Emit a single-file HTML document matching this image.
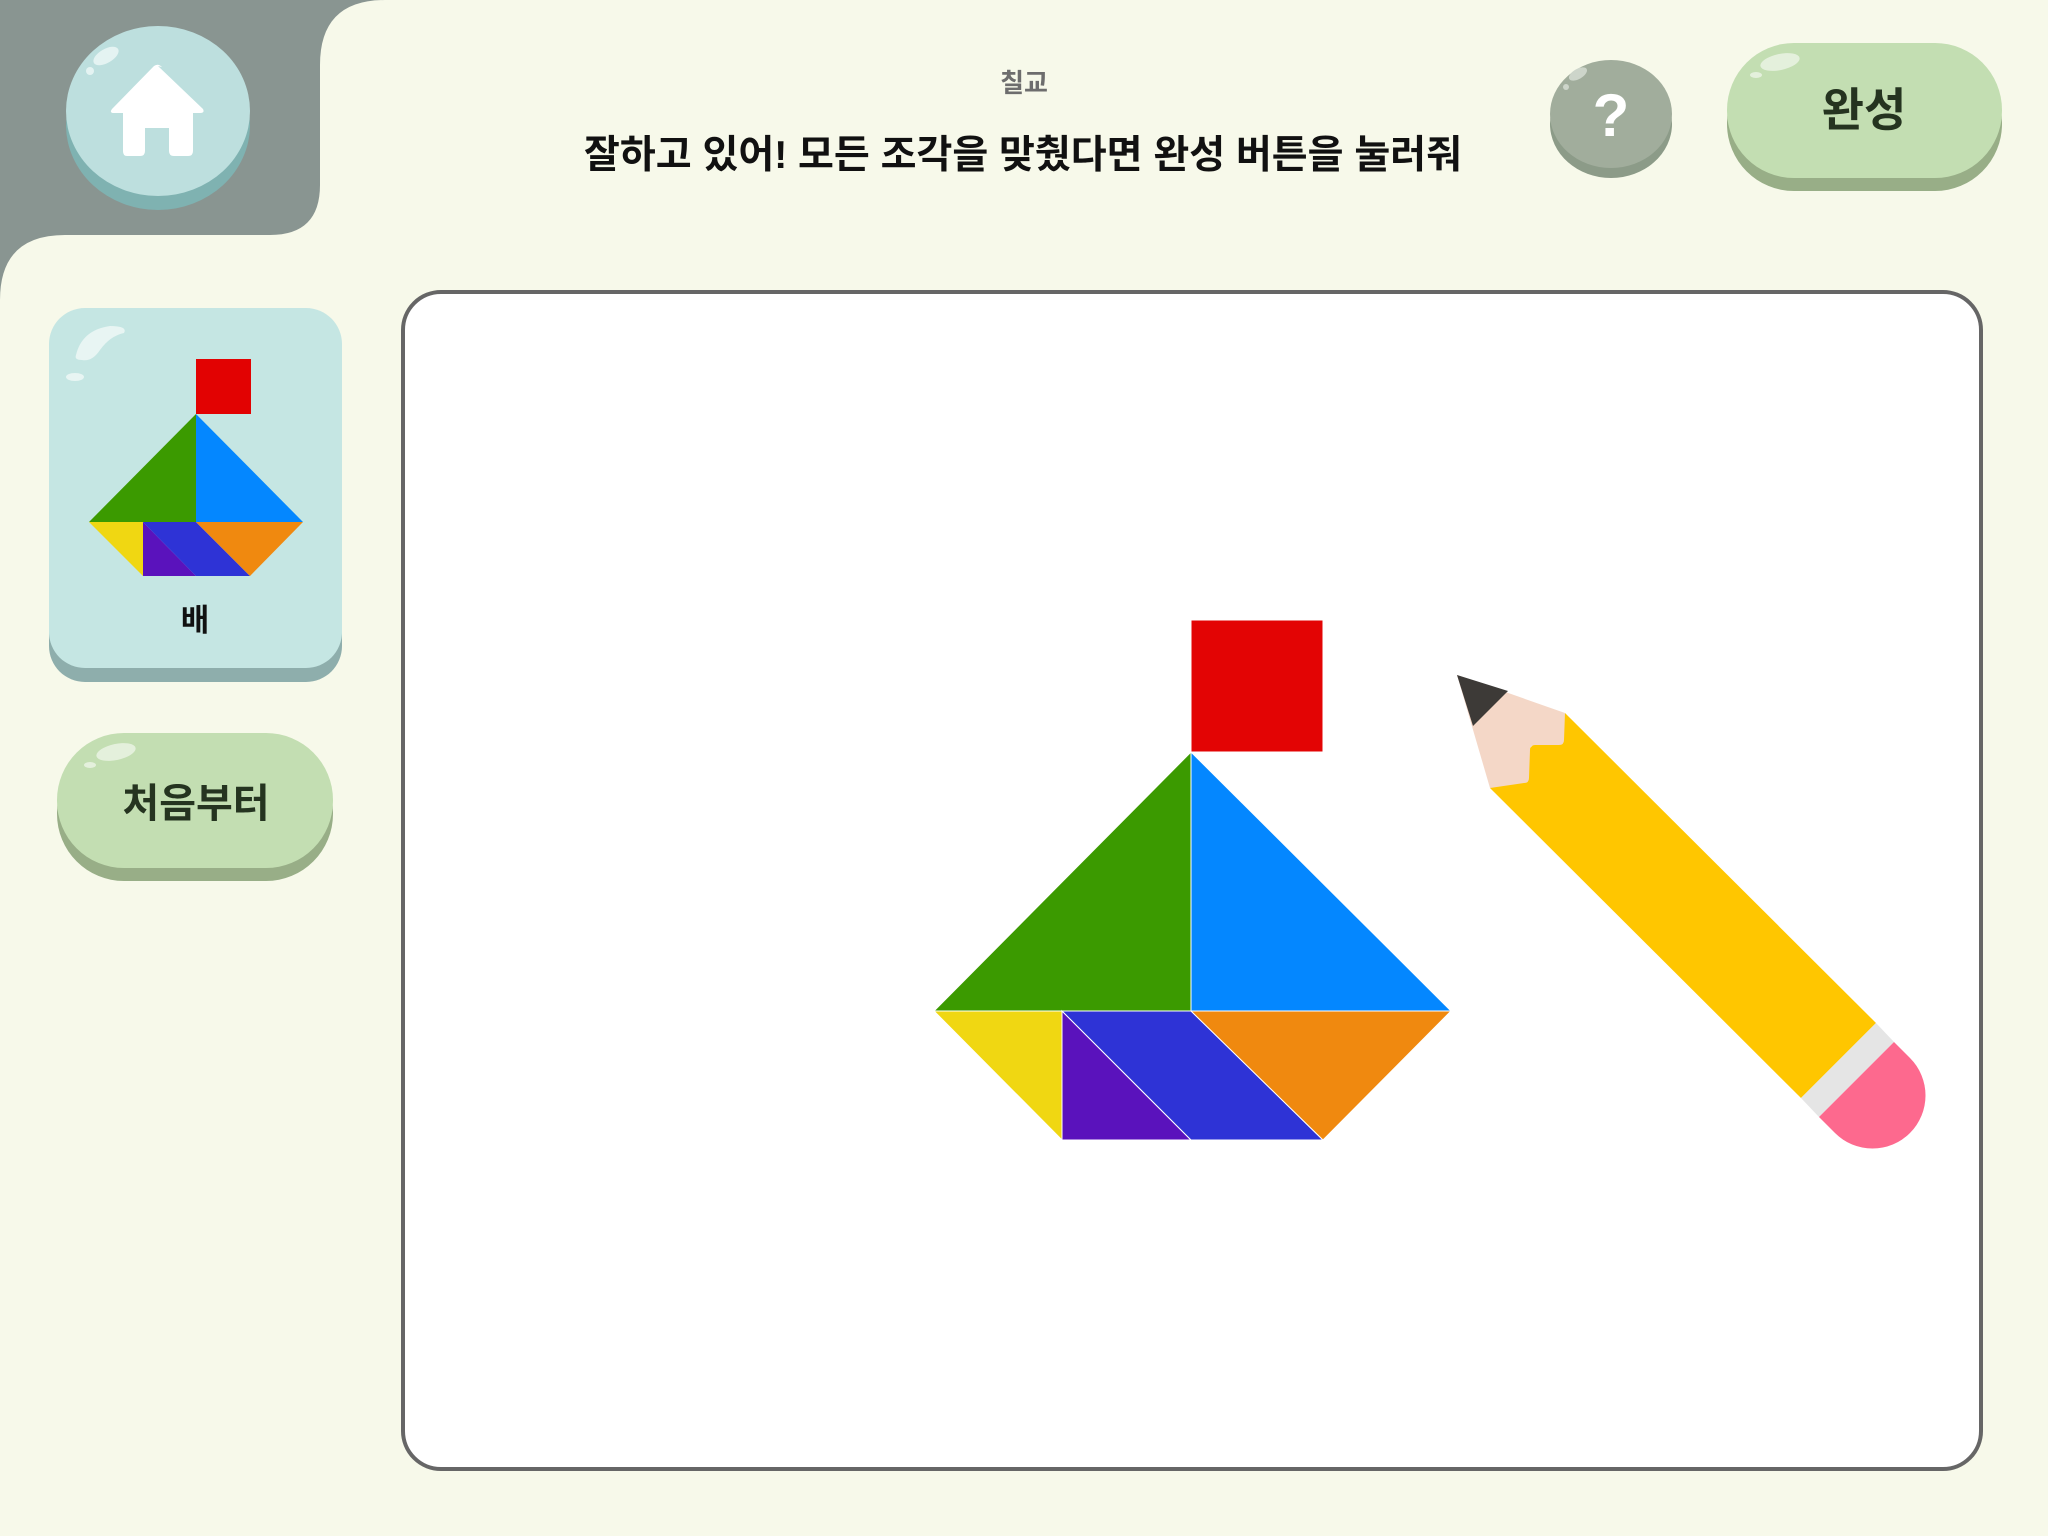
<!DOCTYPE html>
<html><head><meta charset="utf-8"><style>
html,body{margin:0;padding:0;background:#f7f9ea;}
svg{display:block}
text{font-family:"Liberation Sans","Noto Sans CJK KR","NanumGothic",sans-serif;font-weight:bold;}
</style></head><body>
<svg width="2048" height="1536" viewBox="0 0 2048 1536" xmlns="http://www.w3.org/2000/svg">
<rect width="2048" height="1536" fill="#f7f9ea"/>
<!-- top-left gray panel -->
<rect x="0" y="0" width="400" height="320" fill="#899591"/>
<path d="M0 320 L0 300 Q0 235 65 235 L270 235 Q320 235 320 185 L320 65 Q320 0 385 0 L400 0 L400 320 Z" fill="#f7f9ea"/>
<rect x="400" y="0" width="1648" height="320" fill="#f7f9ea"/>
<rect x="0" y="320" width="400" height="20" fill="#f7f9ea"/>
<!-- home button -->
<ellipse cx="158" cy="125" rx="92" ry="85" fill="#7fb2b1"/>
<ellipse cx="158" cy="111" rx="92" ry="85" fill="#bddfde"/>
<ellipse cx="106" cy="56" rx="14" ry="7" fill="#e4f3f2" transform="rotate(-30 106 56)"/>
<circle cx="90" cy="71" r="4" fill="#e4f3f2"/>
<path d="M158 66 L203 109 Q205 113 200 113 L193 113 L193 151 Q193 156 188 156 L174 156 Q169 156 169 151 L169 128 L145 128 L145 151 Q145 156 140 156 L127 156 Q123 156 123 151 L123 113 L114 113 Q109 113 112 109 L154 66 Q158 63 162 67Z" fill="#fff"/>
<!-- title texts -->
<text x="1024" y="92" font-size="26" fill="#6d6d6d" text-anchor="middle">칠교</text>
<text x="1023" y="168" font-size="39" fill="#111" text-anchor="middle" textLength="878" lengthAdjust="spacingAndGlyphs">잘하고 있어! 모든 조각을 맞췄다면 완성 버튼을 눌러줘</text>
<!-- help -->
<ellipse cx="1611" cy="124" rx="61" ry="54" fill="#8c9b88"/>
<ellipse cx="1611" cy="114" rx="61" ry="54" fill="#a1ad9c"/>
<ellipse cx="1578" cy="74" rx="10" ry="5" fill="#cdd5ca" transform="rotate(-30 1578 74)"/>
<circle cx="1566" cy="87" r="3" fill="#cdd5ca"/>
<text x="1611" y="136" font-size="60" fill="#fff" text-anchor="middle" font-family="Liberation Sans">?</text>
<!-- 완성 -->
<rect x="1727" y="56" width="275" height="135" rx="67" fill="#98ae87"/>
<rect x="1727" y="43" width="275" height="135" rx="67" fill="#c3deb2"/>
<ellipse cx="1780" cy="62" rx="20" ry="8" fill="#e4f0dc" transform="rotate(-12 1780 62)"/>
<ellipse cx="1756" cy="75" rx="6" ry="3" fill="#e4f0dc"/>
<text x="1864" y="126" font-size="46" fill="#253420" text-anchor="middle">완성</text>
<!-- card -->
<rect x="49" y="322" width="293" height="360" rx="36" fill="#8eaeac"/>
<rect x="49" y="308" width="293" height="360" rx="36" fill="#c5e6e3"/>
<path d="M76 355 Q82 330 110 326 Q128 326 124 333 Q110 336 100 350 Q92 362 82 360 Q74 360 76 355Z" fill="#e8f5f3"/>
<ellipse cx="75" cy="377" rx="9" ry="4" fill="#e8f5f3"/>
<g>
<rect x="196" y="359" width="55" height="55" fill="#e20202"/>
<polygon points="196,414 89,522 196,522" fill="#3b9a00"/>
<polygon points="196,414 303,522 196,522" fill="#0487ff"/>
<polygon points="89,522 143,522 143,576" fill="#f0d712"/>
<polygon points="143,522 143,576 196,576" fill="#5a12bc"/>
<polygon points="143,522 196,522 250,576 196,576" fill="#2e33d6"/>
<polygon points="196,522 303,522 250,576" fill="#f0890f"/>
</g>
<text x="195" y="631" font-size="31" fill="#111" text-anchor="middle">배</text>
<!-- 처음부터 -->
<rect x="57" y="746" width="276" height="135" rx="67" fill="#98ae87"/>
<rect x="57" y="733" width="276" height="135" rx="67" fill="#c3deb2"/>
<ellipse cx="116" cy="752" rx="20" ry="8" fill="#e4f0dc" transform="rotate(-12 116 752)"/>
<ellipse cx="90" cy="765" rx="6" ry="3" fill="#e4f0dc"/>
<text x="196" y="817" font-size="40" fill="#253420" text-anchor="middle">처음부터</text>
<!-- board -->
<rect x="403" y="292" width="1578" height="1177" rx="38" fill="#fff" stroke="#666" stroke-width="4"/>
<!-- tangram -->
<g stroke="#fff" stroke-width="1">
<rect x="1191" y="620" width="132" height="132" fill="#e30404"/>
<polygon points="1191,752 934,1011 1191,1011" fill="#3b9a00"/>
<polygon points="1191,752 1451,1011 1191,1011" fill="#0487ff"/>
<polygon points="934,1011 1062,1011 1062,1140" fill="#f0d712"/>
<polygon points="1062,1011 1062,1140 1191,1140" fill="#5a12bc"/>
<polygon points="1062,1011 1191,1011 1323,1140 1191,1140" fill="#2e33d6"/>
<polygon points="1191,1011 1451,1011 1323,1140" fill="#f0890f"/>
</g>
<!-- pencil -->
<polygon points="1565,713 1490,788 1801,1098 1876,1023" fill="#ffc600"/>
<polygon points="1876,1023 1801,1098 1819,1117 1894,1042" fill="#e5e5e5"/>
<path d="M1894,1042 L1910,1058 A53 53 0 0 1 1835,1133 L1819,1117 Z" fill="#fd698e"/>
<path d="M1457,675 L1565,713 L1564,740 Q1564,745 1559,745 L1535,745 Q1530,745 1530,750 L1529,778 Q1529,783 1524,783 L1490,788 Z" fill="#f4d7c7"/>
<polygon points="1457,675 1508,691 1473,726" fill="#3d3a37"/>
</svg>
</body></html>
